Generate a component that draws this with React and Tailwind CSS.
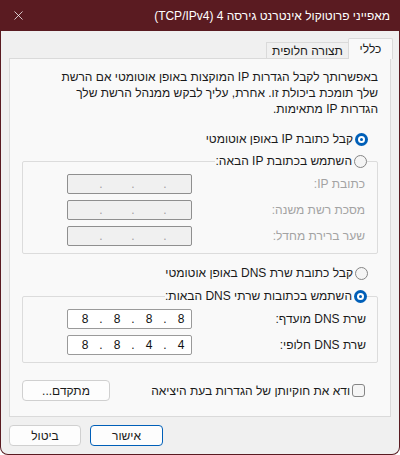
import { X } from "lucide-react";

const font = "font-['Liberation_Sans','DejaVu_Sans',sans-serif]";

function Radio({ checked }) {
  if (checked) {
    return (
      <span className="w-[13px] h-[13px] rounded-full bg-[#005fb8] flex items-center justify-center shrink-0">
        <span className="w-[7px] h-[7px] rounded-full bg-white flex items-center justify-center">
          <span className="w-[3px] h-[3px] rounded-full bg-[#005fb8]" />
        </span>
      </span>
    );
  }
  return <span className="w-[13px] h-[13px] rounded-full border border-[#858585] bg-[#f5f5f5] shrink-0" />;
}

function IpBox({ parts, disabled }) {
  return (
    <div
      dir="ltr"
      className={`w-[125px] h-[20px] rounded-[2px] border flex items-center pl-[4px] ${
        disabled ? "border-[#8f8f8f] bg-[#f0f0f0] text-[#a0a0a0]" : "border-[#9a9a9a] bg-white text-[#111]"
      }`}
    >
      {parts.map((p, i) => (
        <div key={i} className="flex items-center">
          {i > 0 && <span className="w-[6px] text-center leading-none">.</span>}
          <span className="w-[26px] text-center leading-none">{p}</span>
        </div>
      ))}
    </div>
  );
}

function FieldRow({ label, parts, disabled }) {
  return (
    <div className="flex items-center justify-between h-[20px]">
      <span className={disabled ? "text-[#a3a3a3]" : "text-[#1a1a1a]"}>{label}</span>
      <IpBox parts={parts} disabled={disabled} />
    </div>
  );
}

function Group({ legend, checked, children, labelPad }) {
  return (
    <fieldset className="border border-[#dcdcdc] rounded-[2px] px-0">
      <legend className="mr-[10px] h-[18px] flex items-center gap-[2px] bg-[#f9f9f9]">
        <Radio checked={checked} />
        <span>{legend}</span>
      </legend>
      <div className={`flex flex-col gap-[6px] pt-[4px] pb-[7px] pl-[44px] ${labelPad}`}>{children}</div>
    </fieldset>
  );
}

export default function App() {
  const empty = ["", "", "", ""];
  return (
    <div dir="rtl" className={`w-[400px] h-[455px] bg-[#5a1b21] rounded-b-[8px] flex flex-col text-[12px] text-[#1a1a1a] ${font}`}>
      {/* title bar */}
      <div className="h-[31px] flex items-center justify-between pr-[10px] pl-[11px] text-white">
        <span>מאפייני פרוטוקול אינטרנט גירסה 4 (TCP/IPv4)</span>
        <X size={15} strokeWidth={1.2} className="text-white" />
      </div>

      <div className="flex-1 mx-px mb-px bg-[#f0f0f0] rounded-b-[7px] px-2 flex flex-col">
        {/* tabs */}
        <div className="flex items-end h-[21px] mt-[7px] -mr-[2px] -mb-px relative z-10">
          <div className="h-[21px] w-[45px] border border-b-0 border-[#dadada] bg-[#f9f9f9] flex items-center justify-center rounded-t-[2px]">
            כללי
          </div>
          <div className="h-[17px] w-[82px] border border-r-0 border-[#dadada] bg-[#f0f0f0] flex items-center justify-center">
            תצורה חלופית
          </div>
        </div>

        {/* panel */}
        <div className="h-[359px] border border-[#dadada] bg-[#f9f9f9] px-[12px] pt-[10px] flex flex-col">
          <p className="leading-[16px]">
            באפשרותך לקבל הגדרות IP המוקצות באופן אוטומטי אם הרשת
            <br />
            שלך תומכת ביכולת זו. אחרת, עליך לבקש ממנהל הרשת שלך
            <br />
            הגדרות IP מתאימות.
          </p>

          <div className="mt-[13px] h-[18px] flex items-center gap-[2px] pr-[10px]">
            <Radio checked />
            <span>קבל כתובת IP באופן אוטומטי</span>
          </div>

          <div className="mt-[4px]">
            <Group legend="השתמש בכתובת IP הבאה:" labelPad="pr-[12px]">
              <FieldRow label="כתובת IP:" parts={empty} disabled />
              <FieldRow label="מסכת רשת משנה:" parts={empty} disabled />
              <FieldRow label="שער ברירת מחדל:" parts={empty} disabled />
            </Group>
          </div>

          <div className="mt-[10px] h-[18px] flex items-center gap-[2px] pr-[10px]">
            <Radio />
            <span>קבל כתובת שרת DNS באופן אוטומטי</span>
          </div>

          <div className="mt-[5px]">
            <Group legend="השתמש בכתובות שרתי DNS הבאות:" checked labelPad="pr-[11px]">
              <FieldRow label="שרת DNS מועדף:" parts={["8", "8", "8", "8"]} />
              <FieldRow label="שרת DNS חלופי:" parts={["8", "8", "4", "4"]} />
            </Group>
          </div>

          <div className="mt-[17px] h-[21px] flex items-center justify-between pr-[13px]">
            <div className="flex items-center gap-[2px]">
              <span className="w-[13px] h-[13px] rounded-[3px] border border-[#858585] bg-[#f5f5f5]" />
              <span>ודא את חוקיותן של הגדרות בעת היציאה</span>
            </div>
            <button className="w-[88px] h-[21px] rounded-[4px] border border-[#d0d0d0] bg-[#fdfdfd]">מתקדם...</button>
          </div>
        </div>

        {/* footer buttons */}
        <div className="mt-[8px] flex items-center justify-end gap-[9px]">
          <button className="w-[73px] h-[21px] rounded-[4px] border border-[#005fb8] bg-[#fdfdfd]">אישור</button>
          <button className="w-[72px] h-[21px] rounded-[4px] border border-[#d0d0d0] bg-[#fdfdfd]">ביטול</button>
        </div>
      </div>
    </div>
  );
}
